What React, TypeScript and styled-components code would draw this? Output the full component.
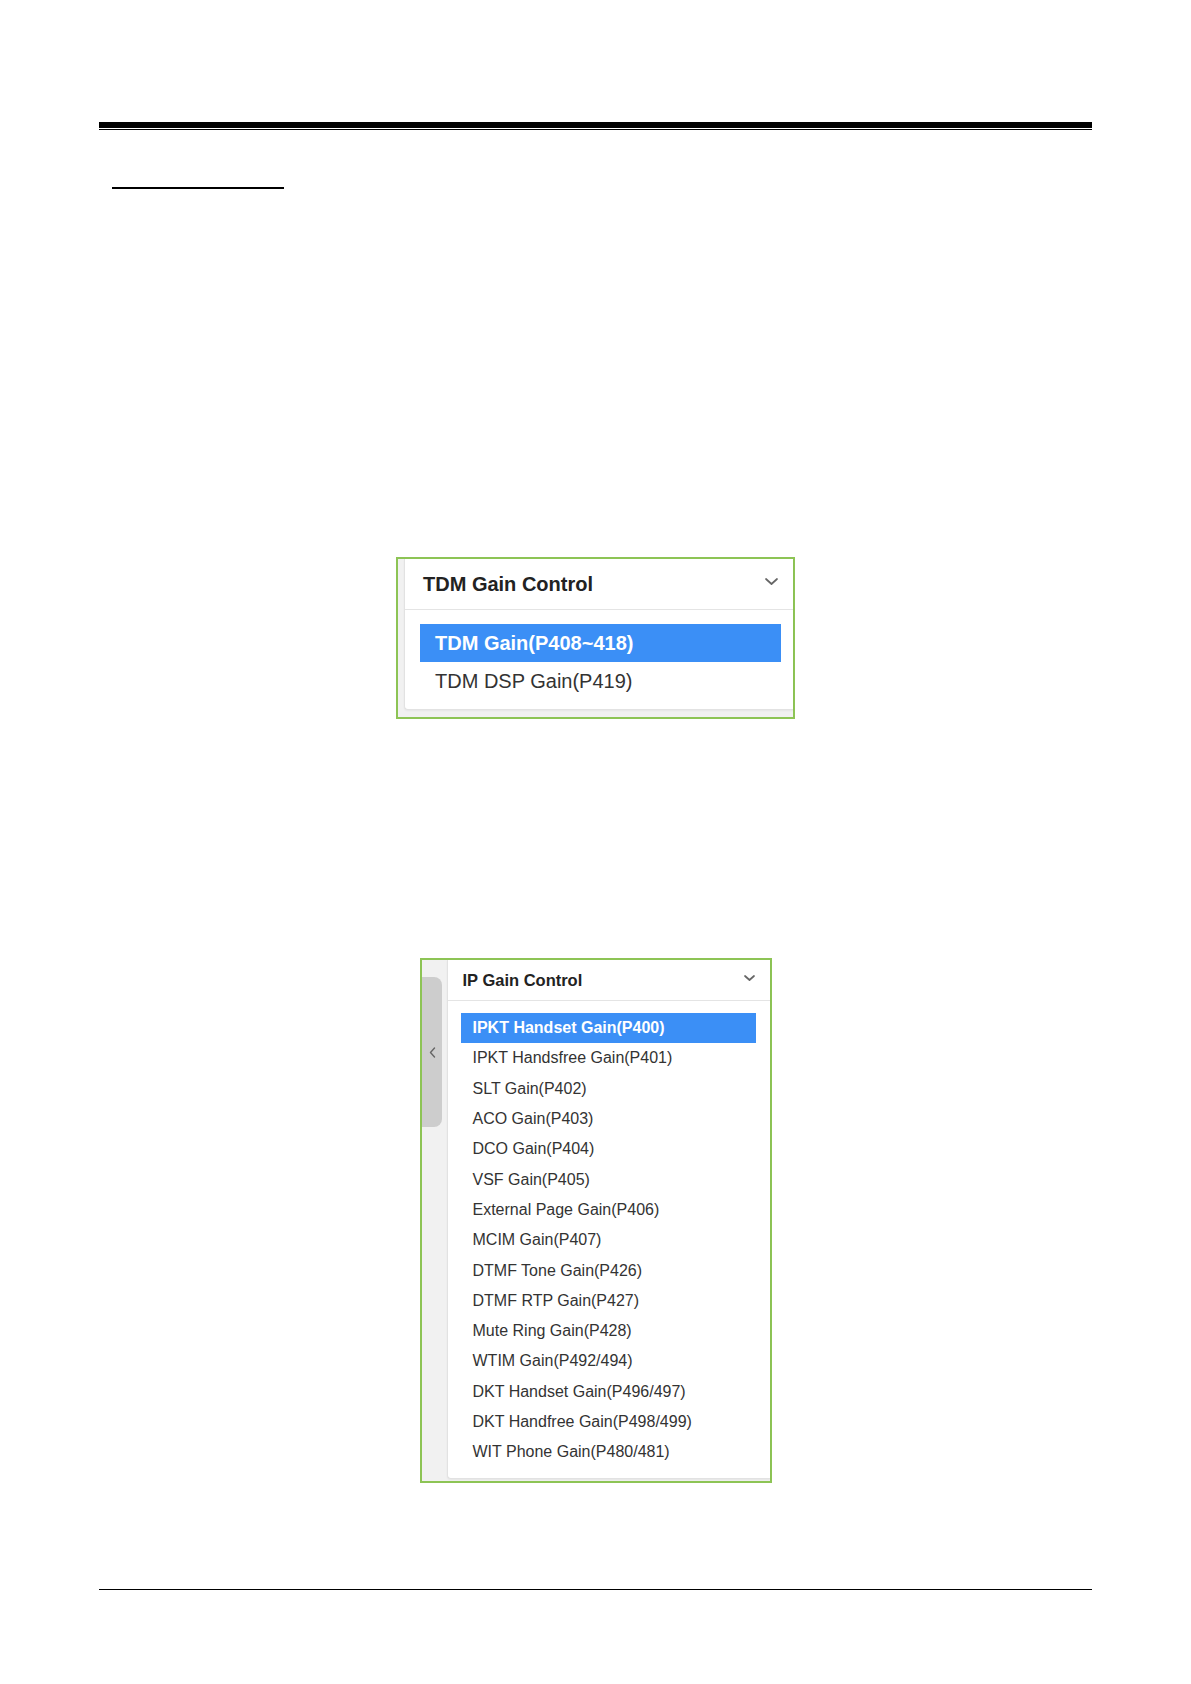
import React from "react";
import styled, { createGlobalStyle } from "styled-components";

const GlobalStyle = createGlobalStyle`
  html, body {
    margin: 0;
    padding: 0;
    background: #fff;
  }
  body {
    font-family: "Liberation Sans", Arial, sans-serif;
  }
`;

type MenuSize = {
  headerH: number;
  titleFont: number;
  titlePad: number;
  chevW: number;
  chevH: number;
  chevRight: number;
  chevLift: number;
  listPadTop: number;
  listPadLeft: number;
  listPadRight: number;
  listPadBottom: number;
  rowH: number;
  rowPad: number;
  font: number;
};

const TDM_SIZE: MenuSize = {
  headerH: 50,
  titleFont: 20,
  titlePad: 18,
  chevW: 13,
  chevH: 7,
  chevRight: 15,
  chevLift: 6,
  listPadTop: 14,
  listPadLeft: 15,
  listPadRight: 12,
  listPadBottom: 9,
  rowH: 38,
  rowPad: 15,
  font: 20,
};

const IP_SIZE: MenuSize = {
  headerH: 40,
  titleFont: 16.5,
  titlePad: 15,
  chevW: 11,
  chevH: 6,
  chevRight: 15,
  chevLift: 4,
  listPadTop: 12,
  listPadLeft: 13,
  listPadRight: 14,
  listPadBottom: 10.5,
  rowH: 30.3,
  rowPad: 12,
  font: 16,
};

const Page = styled.div`
  width: 1191px;
  min-height: 1684px;
  padding-top: 122px;
  box-sizing: border-box;
  display: flex;
  flex-direction: column;
`;

const HeadRule = styled.div`
  margin: 0 99px;
  height: 1px;
  border-top: 6px solid #000;
  border-bottom: 1px solid #000;
`;

const SectionMark = styled.div`
  margin: 57px 0 0 112px;
  width: 172px;
  height: 2px;
  background: #000;
`;

const Figure = styled.div<{ $top: number }>`
  margin-top: ${(p) => p.$top}px;
  display: flex;
  justify-content: center;
`;

const Frame = styled.div<{ $w: number; $padLeft: number; $padBottom: number }>`
  width: ${(p) => p.$w}px;
  box-sizing: border-box;
  border: 2px solid #8dc455;
  background: #f1f1f1;
  display: flex;
  padding: 0 0 ${(p) => p.$padBottom}px ${(p) => p.$padLeft}px;
`;

const SideRail = styled.div`
  width: 25px;
  flex: none;
  padding-top: 17px;
`;

const RailTab = styled.div`
  width: 20px;
  height: 150px;
  background: #cdcdcd;
  border-radius: 0 8px 8px 0;
  display: flex;
  align-items: center;
  justify-content: center;
  padding-left: 2px;
  box-sizing: border-box;
`;

const Panel = styled.div`
  flex: 1;
  background: #fff;
  border-left: 1px solid #e2e2e2;
  border-bottom: 1px solid #e2e2e2;
  border-radius: 0 0 0 4px;
  box-shadow: 0 1px 2px rgba(0, 0, 0, 0.05);
`;

const Header = styled.div<{ $sz: MenuSize }>`
  height: ${(p) => p.$sz.headerH}px;
  display: flex;
  align-items: center;
  justify-content: space-between;
  padding: 0 ${(p) => p.$sz.chevRight}px 0 ${(p) => p.$sz.titlePad}px;
  border-bottom: 1px solid #e4e4e4;
`;

const Title = styled.span<{ $sz: MenuSize }>`
  font-size: ${(p) => p.$sz.titleFont}px;
  font-weight: bold;
  color: #222;
`;

const ChevronSlot = styled.span<{ $lift: number }>`
  display: flex;
  margin-bottom: ${(p) => p.$lift}px;
`;

const List = styled.ul<{ $sz: MenuSize }>`
  list-style: none;
  margin: 0;
  padding: ${(p) => p.$sz.listPadTop}px ${(p) => p.$sz.listPadRight}px
    ${(p) => p.$sz.listPadBottom}px ${(p) => p.$sz.listPadLeft}px;
`;

const Item = styled.li<{ $sz: MenuSize; $active?: boolean }>`
  height: ${(p) => p.$sz.rowH}px;
  display: flex;
  align-items: center;
  padding-left: ${(p) => p.$sz.rowPad}px;
  font-size: ${(p) => p.$sz.font}px;
  font-weight: ${(p) => (p.$active ? "bold" : "normal")};
  color: ${(p) => (p.$active ? "#fff" : "#333")};
  background: ${(p) => (p.$active ? "#3b8ff6" : "transparent")};
  white-space: nowrap;
`;

function ChevronDown({ w, h }: { w: number; h: number }) {
  return (
    <svg width={w} height={h} viewBox={`0 0 ${w} ${h}`} fill="none">
      <polyline
        points={`1,1 ${w / 2},${h - 1} ${w - 1},1`}
        stroke="#666"
        strokeWidth="1.7"
        strokeLinecap="round"
        strokeLinejoin="round"
      />
    </svg>
  );
}

function ChevronLeft() {
  return (
    <svg width="7" height="11" viewBox="0 0 7 11" fill="none">
      <polyline
        points="5.5,1 1.5,5.5 5.5,10"
        stroke="#666"
        strokeWidth="1.4"
        strokeLinecap="round"
        strokeLinejoin="round"
      />
    </svg>
  );
}

function GainMenu({
  title,
  items,
  sz,
}: {
  title: string;
  items: string[];
  sz: MenuSize;
}) {
  return (
    <Panel>
      <Header $sz={sz}>
        <Title $sz={sz}>{title}</Title>
        <ChevronSlot $lift={sz.chevLift}>
          <ChevronDown w={sz.chevW} h={sz.chevH} />
        </ChevronSlot>
      </Header>
      <List $sz={sz}>
        {items.map((item, i) => (
          <Item key={item} $sz={sz} $active={i === 0}>
            {item}
          </Item>
        ))}
      </List>
    </Panel>
  );
}

const tdmItems = ["TDM Gain(P408~418)", "TDM DSP Gain(P419)"];

const ipItems = [
  "IPKT Handset Gain(P400)",
  "IPKT Handsfree Gain(P401)",
  "SLT Gain(P402)",
  "ACO Gain(P403)",
  "DCO Gain(P404)",
  "VSF Gain(P405)",
  "External Page Gain(P406)",
  "MCIM Gain(P407)",
  "DTMF Tone Gain(P426)",
  "DTMF RTP Gain(P427)",
  "Mute Ring Gain(P428)",
  "WTIM Gain(P492/494)",
  "DKT Handset Gain(P496/497)",
  "DKT Handfree Gain(P498/499)",
  "WIT Phone Gain(P480/481)",
];

const FootRule = styled.div`
  margin: 106px 99px 0;
  height: 1px;
  background: #000;
`;

export default function App() {
  return (
    <>
      <GlobalStyle />
      <Page>
        <HeadRule />
        <SectionMark />
        <Figure $top={368}>
          <Frame $w={399} $padLeft={6} $padBottom={7}>
            <GainMenu title="TDM Gain Control" items={tdmItems} sz={TDM_SIZE} />
          </Frame>
        </Figure>
        <Figure $top={239}>
          <Frame $w={352} $padLeft={0} $padBottom={2}>
            <SideRail>
              <RailTab>
                <ChevronLeft />
              </RailTab>
            </SideRail>
            <GainMenu title="IP Gain Control" items={ipItems} sz={IP_SIZE} />
          </Frame>
        </Figure>
        <FootRule />
      </Page>
    </>
  );
}
